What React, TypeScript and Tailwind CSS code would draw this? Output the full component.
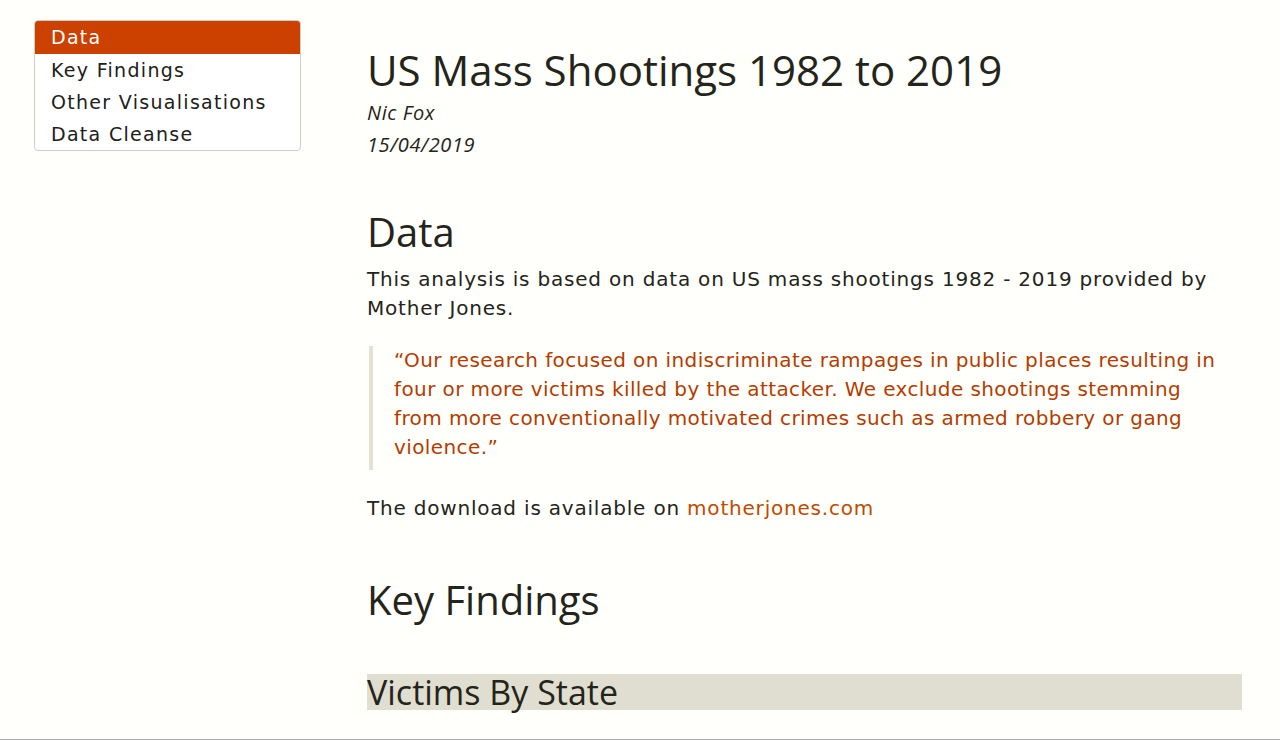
export default function App() {
  const toc = ["Data", "Key Findings", "Other Visualisations", "Data Cleanse"];
  return (
    <div className="min-h-[740px] w-full bg-[#fffffb] text-[#24241a] border-b border-[#a8a8a8]">
      <div className="flex">
        {/* table of contents */}
        <div className="w-[367px] shrink-0 pl-[34px] pt-[20px]">
          <nav className="w-[267px] rounded-[4px] border border-[#cfcfc8] bg-white font-['DejaVu_Sans',sans-serif] text-[19px] leading-[32px] tracking-[1.3px] overflow-hidden">
            {toc.map((t, i) => (
              <div
                key={t}
                className={
                  i === 0
                    ? "bg-[#cc4000] pl-[16px] text-white h-[33px] leading-[33px]"
                    : "pl-[16px] text-[#202018]"
                }
              >
                {t}
              </div>
            ))}
          </nav>
        </div>

        {/* main column */}
        <main className="w-[875px] pt-[43px]">
          <h1 className="font-['Open_Sans',sans-serif] font-medium text-[42px] leading-[54px]">
            US Mass Shootings 1982 to 2019
          </h1>
          <div className="font-['Open_Sans',sans-serif] italic text-[20px] leading-[32px] tracking-[0.6px]">
            <div>Nic Fox</div>
            <div>15/04/2019</div>
          </div>

          <h2 className="mt-[46px] font-['Open_Sans',sans-serif] font-medium text-[40px] leading-[50px]">
            Data
          </h2>
          <p className="mt-[8px] font-['DejaVu_Sans',sans-serif] text-[20px] leading-[29px] tracking-[0.8px]">
            This analysis is based on data on US mass shootings 1982 - 2019 provided by Mother Jones.
          </p>

          <blockquote className="mt-[23px] ml-[2px] border-l-[4px] border-[#e2e1d2] pl-[21px] pr-[18px] pb-[8px] font-['DejaVu_Sans',sans-serif] text-[20px] leading-[29px] tracking-[0.4px] text-[#b53c00]">
            “Our research focused on indiscriminate rampages in public places resulting in four or more
            victims killed by the attacker. We exclude shootings stemming from more conventionally
            motivated crimes such as armed robbery or gang violence.”
          </blockquote>

          <p className="mt-[24px] font-['DejaVu_Sans',sans-serif] text-[20px] leading-[29px] tracking-[0.8px]">
            The download is available on{" "}
            <a className="text-[#c24a00]" href="#">
              motherjones.com
            </a>
          </p>

          <h2 className="mt-[52px] font-['Open_Sans',sans-serif] font-medium text-[40px] leading-[50px]">
            Key Findings
          </h2>

          <h3 className="mt-[49px] bg-[#dfded0] font-['Open_Sans',sans-serif] text-[34px] leading-[36px]">
            Victims By State
          </h3>
        </main>
      </div>
    </div>
  );
}
